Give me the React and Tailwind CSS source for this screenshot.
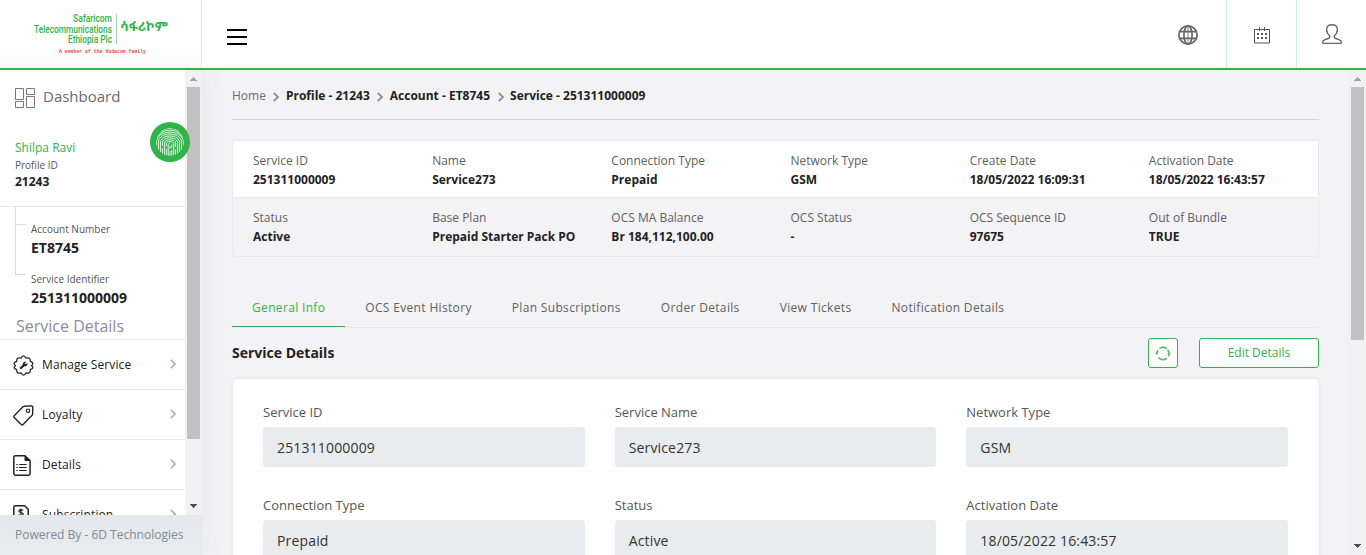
import React from "react";

const summary = [
  [
    ["Service ID", "251311000009"],
    ["Name", "Service273"],
    ["Connection Type", "Prepaid"],
    ["Network Type", "GSM"],
    ["Create Date", "18/05/2022 16:09:31"],
    ["Activation Date", "18/05/2022 16:43:57"],
  ],
  [
    ["Status", "Active"],
    ["Base Plan", "Prepaid Starter Pack PO"],
    ["OCS MA Balance", "Br 184,112,100.00"],
    ["OCS Status", "-"],
    ["OCS Sequence ID", "97675"],
    ["Out of Bundle", "TRUE"],
  ],
];

const tabs = [
  "General Info",
  "OCS Event History",
  "Plan Subscriptions",
  "Order Details",
  "View Tickets",
  "Notification Details",
];

const fields = [
  ["Service ID", "251311000009"],
  ["Service Name", "Service273"],
  ["Network Type", "GSM"],
  ["Connection Type", "Prepaid"],
  ["Status", "Active"],
  ["Activation Date", "18/05/2022 16:43:57"],
];

function ScrollBar({ thumb }) {
  return (
    <div className="flex h-full w-[17px] shrink-0 flex-col items-center bg-[#f1f1f1]">
      <svg className="h-[17px] w-[17px] shrink-0" viewBox="0 0 17 17" shapeRendering="crispEdges">
        <path d="M8 7h1v1h1v1h1v1h1v1H5v-1h1V9h1V8h1z" fill="#a3a3a3" />
      </svg>
      <div className={`w-[13px] shrink-0 bg-[#c1c1c1] ${thumb}`} />
      <svg className="mt-auto h-[17px] w-[17px] shrink-0" viewBox="0 0 17 17" shapeRendering="crispEdges">
        <path d="M5 6h7v1h-1v1h-1v1H9v1H8V9H7V8H6V7H5z" fill="#505050" />
      </svg>
    </div>
  );
}

function Logo() {
  return (
    <div className="flex h-[68px] w-[201px] flex-col pt-[13px] text-[#2fb34a]">
      <div className="flex h-[32px] pl-[34px]">
        <svg className="h-[32px] w-[136px] overflow-visible" viewBox="0 0 136 32">
          <g fill="#2fb34a" fontSize="10" fontFamily="Roboto" fontWeight="500" textAnchor="end">
            <text x="78" y="9.2" textLength="39" lengthAdjust="spacingAndGlyphs">Safaricom</text>
            <text x="78" y="19.6" textLength="78" lengthAdjust="spacingAndGlyphs">Telecommunications</text>
            <text x="78" y="30" textLength="44" lengthAdjust="spacingAndGlyphs">Ethiopia Plc</text>
          </g>
          <path d="M82.5 1v30" stroke="#9bd9a8" />
          <text x="86" y="18" fill="#2fb34a" fontSize="13" fontWeight="700" fontFamily="Noto Sans Ethiopic, Abyssinica SIL, FreeSerif, sans-serif" textLength="48" lengthAdjust="spacingAndGlyphs">ሳፋሪኮም</text>
        </svg>
      </div>
      <svg className="h-[10px] w-[201px]" viewBox="0 0 201 10">
        <text x="59" y="7.6" fill="#ea3e49" fontSize="6" fontWeight="700" fontFamily="Liberation Mono" textLength="87" lengthAdjust="spacingAndGlyphs">A member of the Vodacom family</text>
      </svg>
    </div>
  );
}

function Header() {
  return (
    <header className="relative z-20 flex h-[70px] shrink-0 border-b-2 border-[#2fb34a] bg-white">
      <div className="w-[202px] border-r border-[#d3efd9] bg-linear-to-b from-white from-65% to-[#fafafa]">
        <Logo />
      </div>
      <div className="flex flex-1 items-center pt-[6px] pl-[25px]">
        <svg className="h-[16px] w-[20px]" viewBox="0 0 20 16" shapeRendering="crispEdges">
          <path d="M0 0h20v2H0zM0 7h20v2H0zM0 14h20v2H0z" fill="#000" />
        </svg>
      </div>
      <div className="flex w-[77px] items-center justify-center border-r border-[#d3efd9]">
        <svg className="mt-[2px] h-[20px] w-[20px]" viewBox="0 0 20 20" fill="none" stroke="#666" strokeWidth="1.7">
          <circle cx="10" cy="10" r="9.1" />
          <ellipse cx="10" cy="10" rx="4.1" ry="9.1" />
          <path d="M10 1v18" strokeWidth=".8" />
          <path d="M1.600 6.700h16.800M1.600 13.300h16.800" />
        </svg>
      </div>
      <div className="flex w-[70px] items-center justify-center border-r border-[#d3efd9]">
        <svg className="mt-[2px] h-[17px] w-[16px]" viewBox="0 0 16 17">
          <path d="M.5 2.500h15v13.500H.5zM5.500 0v4M10.500 0v4" fill="none" stroke="#555" />
          <path d="M3 6h2v2H3zM7 6h2v2H7zM11 6h2v2h-2zM3 10h2v2H3zM7 10h2v2H7zM11 10h2v2h-2z" fill="#555" />
        </svg>
      </div>
      <div className="flex w-[69px] items-center justify-center">
        <svg className="h-[20px] w-[20px]" viewBox="0 0 20 20" fill="none" stroke="#666" strokeWidth="1.400" strokeLinejoin="round">
          <path d="M7.700 11.700C5.700 10.200 4.600 8 4.600 5.600 4.600 2.600 6.600.7 10 .7s5.400 1.900 5.400 4.900c0 2.400-1.100 4.600-3.100 6.100v1.300c0 .8.500 1.200 1.400 1.500l3.800 1.300c1.100.4 1.800 1.200 1.800 2.200v.8c0 .4-.3.6-.7.6H1.400c-.4 0-.7-.2-.7-.6V18c0-1 .7-1.800 1.800-2.200l3.800-1.300c.9-.3 1.400-.7 1.400-1.500z" />
        </svg>
      </div>
    </header>
  );
}

function Chevron({ className, color, width = 1.8 }) {
  return (
    <svg className={className} viewBox="0 0 6 10" fill="none" stroke={color} strokeWidth={width}>
      <path d="M.7.8 5 5 .7 9.200" />
    </svg>
  );
}

function GearIcon() {
  return (
    <svg className="h-[21px] w-[21px]" viewBox="0 0 21 21" fill="none" stroke="#222" strokeWidth="1.300" strokeLinejoin="round">
      <path d="M8 3.200Q10.500-1.400 13 3.200 17.600 1.900 17.300 6.300 21.800 8 18.500 10.500 21.800 13 17.300 14.700 17.600 19.100 13 17.800 10.500 22.400 8 17.800 3.400 19.100 3.700 14.700-.8 13 2.500 10.500-.8 8 3.700 6.300 3.400 1.900 8 3.200z" />
      <path d="m7.200 13.800 4-4" strokeWidth="2.200" />
      <path d="M10 10.500c-.7-2 .700-3.900 2.900-3.600l-1.200 1.500.9.900 1.700-1.100c.2 2.100-1.500 3.500-3.400 2.900z" fill="#222" strokeWidth=".3" />
    </svg>
  );
}

function TagIcon() {
  return (
    <svg className="h-[21px] w-[21px]" viewBox="0 0 21 21" fill="none" stroke="#222" strokeWidth="1.400" strokeLinejoin="round">
      <path d="M11 1.200 18.500.9c.8 0 1.300.4 1.300 1.200l-.2 7.200c0 .4-.2.7-.5 1l-9 9.200c-.6.6-1.300.6-1.900 0l-7-6.900c-.6-.6-.6-1.300 0-1.900l8.800-9c.3-.3.6-.5 1-.5z" />
      <circle cx="15" cy="5.700" r="1.700" strokeWidth="1.200" />
    </svg>
  );
}

function DocIcon() {
  return (
    <svg className="h-[21px] w-[18px]" viewBox="0 0 18 21" fill="none" stroke="#222" strokeWidth="1.500">
      <path d="M2.500.8h9.200l5.400 5v12.700c0 1.100-.6 1.700-1.700 1.700H2.500c-1.100 0-1.700-.6-1.700-1.700v-16C.8 1.400 1.400.8 2.500.8z" />
      <path d="M12 .8v4.700h5z" fill="#222" strokeWidth="1" />
      <path d="M6.200 9.500h7.500M6.200 12.500h7.500M6.200 15.500h7.500M3.300 9.500h1.500M3.300 12.500h1.500M3.300 15.500h1.500" strokeWidth="1.100" />
    </svg>
  );
}

function InvoiceIcon() {
  return (
    <svg className="h-[21px] w-[16px]" viewBox="0 0 16 21" fill="none" stroke="#222" strokeWidth="1.500">
      <path d="M2.500.8h9.200l3.500 3.400v14.300c0 1.100-.6 1.700-1.700 1.700h-11c-1.100 0-1.700-.6-1.700-1.700v-16C.8 1.400 1.400.8 2.500.8z" />
      <path d="M10 5.800c-.5-.8-1.200-1.100-2.200-1.100-1.300 0-2 .5-2 1.400 0 2 4.400.8 4.400 3 0 1-1 1.500-2.300 1.500-1.100 0-1.900-.4-2.300-1.200M7.900 3.500v8.500" strokeWidth="1.200" />
    </svg>
  );
}

function Fingerprint() {
  return (
    <div className="absolute top-[52px] left-[150px] flex h-[40px] w-[40px] items-center justify-center rounded-full bg-[#2fb34a]">
      <svg className="h-[28px] w-[28px]" viewBox="0 0 28 28" fill="none" stroke="#e6f6e9" strokeWidth="1">
        <clipPath id="pad"><circle cx="14" cy="14" r="13.800" /></clipPath>
        <g clipPath="url(#pad)">
          <path d="M5 3.500C7.500 1.500 10.500.5 14 .5s6.500 1 9 3" />
          <path d="M1.500 9C3.500 5 8 2.300 14 2.300S24.500 5 26.500 9" />
          <path d="M.5 18v-3.500C.5 8.500 6 4.200 14 4.200s13.500 4.300 13.500 10.300V18" />
          <path d="M2.400 22v-7.200C2.400 9.600 7 6.100 14 6.100s11.600 3.500 11.600 8.700V22" />
          <path d="M4.400 24v-9c0-4.200 3.800-7 9.600-7s9.600 2.800 9.600 7v9" />
          <path d="M6.400 18v-2.800c0-3.200 3-5.300 7.600-5.300s7.600 2.100 7.600 5.300V26M6.400 20v6" />
          <path d="M8.400 27V15.500c0-2.300 2.100-3.700 5.600-3.700s5.600 1.400 5.600 3.700V19M19.600 21v6" />
          <path d="M10.300 18.500v-2.700c0-1.400 1.400-2.200 3.700-2.200s3.700.8 3.700 2.200V28M10.300 20.500V28" />
          <path d="M12.200 28V17c0-.9.700-1.500 1.800-1.500M15.800 16.500V20M15.800 22v6M14 18v3M14 23v5" />
        </g>
      </svg>
    </div>
  );
}

function MenuItem({ icon, label }) {
  return (
    <div className="flex h-[50px] shrink-0 items-center border-t border-[#e8e8ea] pl-[13px]">
      <div className="mt-[2px] w-[29px]">{icon}</div>
      <span className="flex-1 text-[12px] tracking-[0.12px] text-[#222]">{label}</span>
      <Chevron className="mr-[9px] mb-[1px] h-[10px] w-[6px]" color="#a3b0ba" width={1.6} />
    </div>
  );
}

function Sidebar() {
  return (
    <aside className="relative z-10 flex w-[202px] shrink-0 flex-col shadow-[0_0_28px_rgba(82,63,105,0.08)]">
      <div className="flex h-[445px] bg-white">
        <div className="flex min-w-0 flex-1 flex-col overflow-hidden">
          <div className="flex h-[54px] shrink-0 items-center gap-[8px] pl-[15px]">
            <svg className="mt-[2px] h-[20px] w-[20px]" viewBox="0 0 20 20" fill="none" stroke="#777">
              <path d="M.5.500h8v11h-8zM.5 13.500h8v6h-8zM11.500.5h8v6h-8zM11.500 8.500h8v11h-8z" />
            </svg>
            <span className="mb-[2px] text-[15px] text-[#6b6b6b]">Dashboard</span>
          </div>
          <div className="flex h-[83px] shrink-0 flex-col border-b border-[#e8e8ea] pt-[14px] pl-[15px]">
            <span className="h-[19px] text-[12px] leading-[20px] text-[#2fb34a]">Shilpa Ravi</span>
            <span className="h-[17px] text-[10px] leading-[16px] text-[#555]">Profile ID</span>
            <span className="h-[16px] text-[12px] leading-[16px] font-bold text-[#222]">21243</span>
          </div>
          <div className="flex h-[106px] shrink-0 pl-[15px]">
            <div className="flex h-[68px] w-[16px] flex-col border-l border-[#d9d9dc]">
              <div className="h-[18px] w-[10px] border-b border-[#d9d9dc]" />
              <div className="h-[50px] w-[10px] border-b border-[#d9d9dc]" />
            </div>
            <div className="flex flex-col pt-[13px]">
              <span className="h-[18px] text-[10px] leading-[18px] text-[#555]">Account Number</span>
              <span className="h-[32px] text-[14px] leading-[20px] font-bold text-[#222]">ET8745</span>
              <span className="h-[18px] text-[10px] leading-[18px] text-[#555]">Service Identifier</span>
              <span className="text-[14px] leading-[20px] font-bold text-[#222]">251311000009</span>
            </div>
          </div>
          <div className="h-[26px] shrink-0 pl-[16px] text-[16px] leading-[26px] text-[#8a8c9c]">Service Details</div>
          <MenuItem icon={<GearIcon />} label="Manage Service" />
          <MenuItem icon={<TagIcon />} label="Loyalty" />
          <MenuItem icon={<DocIcon />} label="Details" />
          <MenuItem icon={<InvoiceIcon />} label="Subscription" />
        </div>
        <ScrollBar thumb="h-[352px]" />
      </div>
      <footer className="h-[40px] bg-linear-to-b from-[#e4e7eb] to-[#e8ecef] pl-[15px] text-[12px] leading-[40px] text-[#7d8a97]">
        Powered By - 6D Technologies
      </footer>
      <Fingerprint />
    </aside>
  );
}

function Breadcrumb() {
  const links = ["Profile - 21243", "Account - ET8745", "Service - 251311000009"];
  return (
    <nav className="flex h-[50px] shrink-0 items-center border-b border-[#d6d6d8] pt-[3px] text-[12px]">
      <span className="text-[#6b6b6b]">Home</span>
      {links.map((link) => (
        <React.Fragment key={link}>
          <Chevron className="mt-[2px] mr-[6.5px] ml-[7.5px] h-[10px] w-[6px]" color="#8f8a86" />
          <span className="font-bold text-[#222]">{link}</span>
        </React.Fragment>
      ))}
    </nav>
  );
}

function Main() {
  return (
    <main className="flex min-w-0 flex-1 flex-col overflow-hidden bg-[#f3f3f6] pr-[30px] pl-[30px]">
      <Breadcrumb />
      <section className="mt-[20px] flex h-[117px] shrink-0 flex-col overflow-hidden rounded-[4px] border border-[#e9e9ec]">
        {summary.map((row, i) => (
          <div
            key={i}
            className={
              i === 0
                ? "grid h-[57px] grid-cols-6 border-b border-[#e9e9ec] bg-white pt-[10px] pr-[10px]"
                : "grid h-[58px] grid-cols-6 pt-[10px] pr-[10px]"
            }
          >
            {row.map(([label, value]) => (
              <div key={label} className="flex flex-col pl-[20px] text-[12px] leading-[19px] whitespace-nowrap">
                <span className="text-[#606060]">{label}</span>
                <span className="font-bold text-[#222]">{value}</span>
              </div>
            ))}
          </div>
        ))}
      </section>
      <div className="mt-[31px] flex h-[40px] shrink-0 border-b border-[#e9e9ec] text-[12px] tracking-[0.335px]">
        {tabs.map((tab, i) => (
          <div
            key={tab}
            className={
              i === 0
                ? "h-[39px] border-b border-[#2fb34a] px-[20px] leading-[40px] text-[#2fb34a]"
                : "h-[39px] px-[20px] leading-[40px] text-[#606060]"
            }
          >
            {tab}
          </div>
        ))}
      </div>
      <div className="flex h-[51px] shrink-0 items-start pt-[10px]">
        <h2 className="flex-1 text-[14px] leading-[30px] font-bold text-[#222]">Service Details</h2>
        <button className="mr-[21px] flex h-[30px] w-[30px] items-center justify-center rounded-[3px] border border-[#2fb34a] bg-white">
          <svg className="h-[16px] w-[16px]" viewBox="0 0 16 16" fill="none" stroke="#55c06b" strokeWidth="1.800">
            <path d="M4.400 3.500A6 6 0 0 1 11.800 3.700M1.900 8.800A6 6 0 0 1 3 5M11.800 13.200A6 6 0 0 1 3.400 12.500M12.600 4.800a6 6 0 0 1 .6 6.600" />
            <path d="M.5 8h2.900L1.900 10.100zM12.600 8.600 14 6.600l1.500 2z" fill="#55c06b" strokeWidth=".2" />
          </svg>
        </button>
        <button className="h-[30px] w-[120px] rounded-[3px] border border-[#2fb34a] bg-white text-[12px] leading-[28px] text-[#2fb34a]">
          Edit Details
        </button>
      </div>
      <section className="mx-[0.5px] grid h-[240px] shrink-0 grid-cols-3 content-start gap-x-[30px] rounded-[5px] bg-white px-[30.5px] pt-[22px] shadow-[0_0_5px_rgba(82,63,105,0.1)]">
        {fields.map(([label, value]) => (
          <div key={label} className="flex h-[93px] flex-col">
            <span className="h-[26px] text-[13px] leading-[23px] text-[#555]">{label}</span>
            <div className="h-[40px] rounded-[3px] bg-[#e8ecef] pl-[14px] text-[14px] leading-[42px] tracking-[0.16px] text-[#333]">{value}</div>
          </div>
        ))}
      </section>
    </main>
  );
}

export default function App() {
  return (
    <div className="flex h-[555px] w-[1366px] flex-col overflow-hidden bg-[#f3f3f6] font-['Open_Sans',sans-serif]">
      <Header />
      <div className="flex h-[485px]">
        <Sidebar />
        <Main />
        <ScrollBar thumb="h-[253px]" />
      </div>
    </div>
  );
}
